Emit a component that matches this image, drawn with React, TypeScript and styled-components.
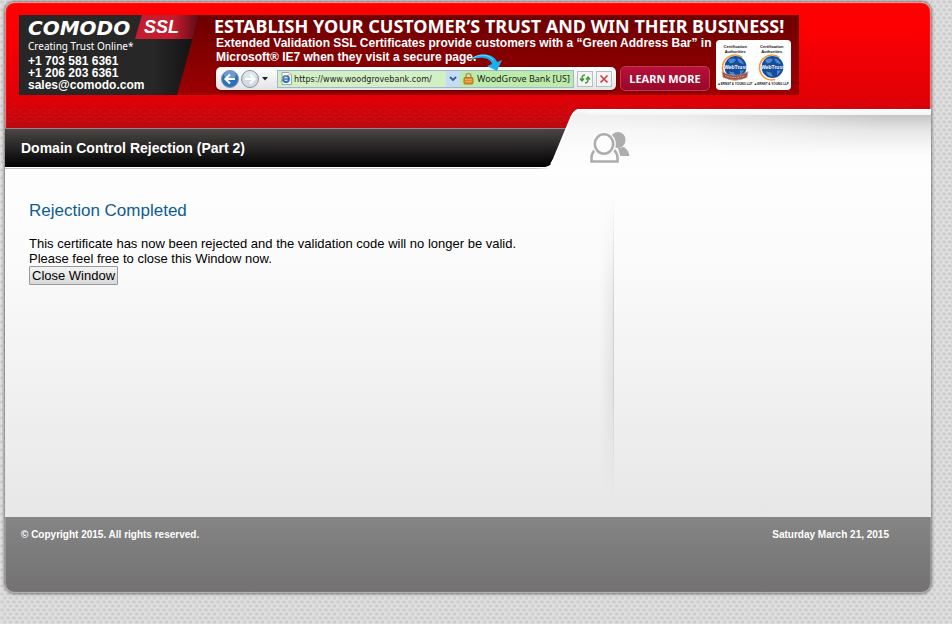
import React from "react";
import styled, { createGlobalStyle } from "styled-components";

const sans = `"Liberation Sans", Arial, sans-serif`;
const humanist = `"Noto Sans", "Open Sans", sans-serif`;

const GlobalStyle = createGlobalStyle`
  *, *::before, *::after { box-sizing: border-box; }
  body {
    margin: 0;
    min-height: 100vh;
    font-family: ${sans};
    font-size: 13px;
    color: #000;
    background-color: #dedede;
    background-image:
      radial-gradient(ellipse 3px 2px at 2px 2px, #cbcbcb 30%, transparent 100%),
      radial-gradient(ellipse 3px 2px at 5px 6px, #cbcbcb 30%, transparent 100%);
    background-size: 6px 8px;
  }
`;

const Card = styled.div`
  margin: 2px 21px 30px 5px;
  border-radius: 10px;
  overflow: hidden;
  background: #fdfdfd;
  box-shadow: 0 0 3px 1px rgba(0, 0, 0, 0.45);
`;

const Header = styled.header`
  padding-top: 13px;
  background:
    radial-gradient(ellipse 5px 3px at 5px 4px, transparent 70%, rgba(255, 90, 90, 0.05) 85%, transparent 100%) 0 97px / 10px 8px repeat-x,
    radial-gradient(ellipse 5px 3px at 5px 4px, transparent 70%, rgba(255, 90, 90, 0.1) 85%, transparent 100%) 5px 105px / 10px 8px repeat-x,
    radial-gradient(ellipse 5px 3px at 5px 4px, transparent 70%, rgba(255, 90, 90, 0.14) 85%, transparent 100%) 0 113px / 10px 8px repeat-x,
    linear-gradient(#ff0000 0, #fb0003 30px, #e00006 96px, #b80a10 127px);
  border-radius: 10px 10px 0 0;
  box-shadow: inset 0 2px 1px -1px #ff9a9a, inset 2px 0 1px -1px #ff8080, inset -2px 0 1px -1px #ff8080;
`;

const Banner = styled.section`
  display: flex;
  width: 780px;
  max-width: 100%;
  height: 80px;
  margin-left: 14px;
  background: linear-gradient(#6c0001, #9c0002);
  color: #fff;
`;

const Brand = styled.div`
  display: flex;
  flex-direction: column;
  flex: 0 0 180px;
  padding-left: 9px;
  background: linear-gradient(90deg, #272727 75%, #101010);
  clip-path: polygon(0 0, 100% 0, 158px 100%, 0 100%);
  font-weight: bold;
  font-size: 12px;
  line-height: 12px;
`;

const BrandTop = styled.div`
  display: flex;
  height: 24px;
  gap: 2px;
`;

const Wordmark = styled.span`
  width: 105px;
  padding-top: 3px;
  font: italic bold 20px/20px "DejaVu Sans", sans-serif;
`;

const SslMark = styled.span`
  flex: 1;
  padding-left: 9px;
  background: linear-gradient(90deg, #c51c30 60%, #5c0b14);
  clip-path: polygon(7px 0, 100% 0, 100% 100%, 0 100%);
  font: italic bold 18px/25px ${sans};
`;

const Tagline = styled.span`
  font: 10px/14px ${humanist};
  padding-bottom: 2px;
  height: 16px;
`;

const Promo = styled.div`
  flex: 1;
  min-width: 0;
  padding: 1px 8px 0 15px;
`;

const Headline = styled.h2`
  margin: 0;
  font: bold 18px/20px ${humanist};
  white-space: nowrap;
`;

const PromoRow = styled.div`
  display: flex;
  gap: 4px;
`;

const PromoMain = styled.div`
  flex: 0 0 498px;
  padding-left: 2px;
`;

const PromoText = styled.p`
  margin: 0;
  font-weight: bold;
  font-size: 12px;
  line-height: 14px;
  white-space: nowrap;
`;

const Browser = styled.div`
  display: flex;
  align-items: center;
  gap: 4px;
  padding-top: 2px;
`;

const Chrome = styled.div`
  position: relative;
  display: flex;
  flex: 0 0 400px;
  align-items: center;
  height: 23px;
  padding: 0 4px;
  border-radius: 5px;
  background: linear-gradient(#fff, #e4e4e4);
  box-shadow: 0 1px 3px rgba(0, 0, 0, 0.5);
`;

const IconButton = styled.button<{ $framed?: boolean }>`
  display: flex;
  flex: none;
  align-items: center;
  justify-content: center;
  width: ${(p) => (p.$framed ? 16 : 20)}px;
  height: ${(p) => (p.$framed ? 16 : 20)}px;
  padding: 0;
  border: ${(p) => (p.$framed ? "1px solid #b5bfca" : "0")};
  background: ${(p) => (p.$framed ? "#f4f4f4" : "none")};
`;

const Tools = styled.div`
  display: flex;
  gap: 3px;
  margin-left: 3px;
`;

const AddressField = styled.div`
  display: flex;
  align-items: center;
  flex: 1;
  min-width: 0;
  height: 18px;
  margin-left: 7px;
  padding-left: 2px;
  border: 1px solid #9fb6cf;
  background: #d3f0c5;
`;

const UrlInput = styled.input`
  flex: 1;
  min-width: 0;
  height: 16px;
  margin-left: 2px;
  padding: 0;
  border: 0;
  background: none;
  color: #222;
  font: 9px/16px "DejaVu Sans Condensed", "DejaVu Sans", sans-serif;
`;

const Identity = styled.span`
  display: flex;
  flex: none;
  align-items: center;
  gap: 3px;
  width: 113px;
  height: 16px;
  padding-left: 3px;
  background: #bcecaa;
  color: #222;
  font: 9px/16px ${humanist};
  white-space: nowrap;

  svg { flex: none; }
`;

const DropCell = styled(IconButton)`
  width: 14px;
  height: 16px;
  background: #c5dcf5;
`;

const Swoosh = styled.svg`
  position: absolute;
  left: 254px;
  top: -14px;
`;

const LearnMore = styled.a`
  width: 90px;
  height: 25px;
  border: 1px solid #cf3150;
  border-radius: 5px;
  background: linear-gradient(#b8103a, #96092b);
  box-shadow: 0 0 3px rgba(0, 0, 0, 0.5);
  color: #fff;
  font: bold 11px/23px ${humanist};
  text-align: center;
  text-decoration: none;
  white-space: nowrap;
`;

const Seals = styled.div`
  display: flex;
  flex: 0 0 75px;
  height: 50px;
  margin-top: 4px;
  padding: 4px 1px 0;
  border-radius: 4px;
  background: #fff;
`;

const Seal = styled.div`
  display: flex;
  flex: 1;
  flex-direction: column;
  align-items: center;
  min-width: 0;
  color: #111;
  font: bold 4px/5px ${sans};
  text-align: center;
  white-space: nowrap;
`;

const Auditor = styled.span`
  font-size: 3px;
`;

const TitleRow = styled.div`
  display: flex;
  align-items: flex-end;
  margin-top: 14px;
`;

const TitleBar = styled.div`
  flex: 0 0 538px;
  height: 39px;
  padding-left: 16px;
  border-top: 1px solid #a08080;
  background: linear-gradient(#4c4747, #000);
`;

const Title = styled.h1`
  margin: 0;
  color: #fff;
  font-size: 14px;
  line-height: 38px;
`;

const Curve = styled.svg`
  flex: 0 0 45px;
  display: block;
`;

const Tab = styled.div`
  flex: 1;
  height: 58px;
  padding: 22px 0 0 2px;
  background:
    linear-gradient(#fff, #f4f4f4) 0 0 / 100% 6px no-repeat,
    linear-gradient(transparent 6px, rgba(253, 253, 253, 0.6) 22px, #fdfdfd 46px),
    linear-gradient(90deg, #f0f0f0, #ebebeb 30%, #c6c6c6 85%);
`;

const Content = styled.div`
  display: flex;
  min-height: 350px;
  background:
    linear-gradient(90deg, #c4c4c4 530px, transparent 546px) 0 1px / 100% 1px no-repeat,
    linear-gradient(#fefefe, #fbfbfb 25%, #e7e7e7);
`;

const Main = styled.main`
  flex: 0 0 608px;
  padding: 34px 24px 0;
  line-height: 15px;
`;

const Heading = styled.h2`
  margin: 0 0 15px;
  color: #0d5c94;
  font-size: 17px;
  font-weight: normal;
  line-height: 20px;
`;

const Message = styled.p`
  margin: 0;
`;

const CloseButton = styled.button`
  display: block;
  height: 19px;
  padding: 0 2px;
  border: 1px solid #999;
  border-radius: 1px;
  background: linear-gradient(#f4f4f4, #d9d9d9);
  color: #000;
  font: 13px/17px ${sans};
`;

const Divider = styled.div`
  width: 14px;
  height: 303px;
  margin: 28px 0 0 -13px;
  border-right: 1px solid #d0d0d0;
  background: linear-gradient(90deg, transparent, rgba(0, 0, 0, 0.06)) padding-box;
  mask-image: linear-gradient(transparent, #000 35%, #000 65%, transparent);
`;

const Footer = styled.footer`
  display: flex;
  justify-content: space-between;
  height: 76px;
  padding: 11px 42px 0 16px;
  border-radius: 0 0 10px 10px;
  background: linear-gradient(#858585, #737171);
  box-shadow: inset 0 -2px 1px -1px #bbb, inset 1px 0 #999, inset -1px 0 #999;
  color: #fff;
  font-weight: bold;
  font-size: 10px;
  line-height: 14px;
`;

const NavArrow = ({ back }: { back?: boolean }) => (
  <svg width="20" height="20" viewBox="0 0 20 20">
    <circle cx="10" cy="10" r="8.5" fill={back ? "#2b6fc0" : "#d2dbe4"} stroke="#8a949e" />
    <ellipse cx="10" cy="6" rx="6" ry="4" fill="#fff" opacity="0.3" />
    <path d={back ? "M15 10H6M10 5.500L5.500 10l4.500 4.500" : "M5 10h9M10 5.500L14.500 10L10 14.500"} fill="none" stroke="#fff" strokeWidth="2.200" />
  </svg>
);

const PageIcon = () => (
  <svg width="12" height="13" viewBox="0 0 12 13">
    <path d="M2 .5h7l2.500 2.500v9.500H2z" fill="#fff" stroke="#94a8bd" />
    <circle cx="6" cy="7" r="3" fill="none" stroke="#2274c9" strokeWidth="1.800" />
    <path d="M4 7h5" stroke="#2274c9" strokeWidth="1.400" />
    <path d="M1 10C2 6 7 2 10.500 3" fill="none" stroke="#e3a632" />
  </svg>
);

const LockIcon = () => (
  <svg width="11" height="13" viewBox="0 0 11 13">
    <path d="M3 6V4a2.500 2.500 0 0 1 5 0v2" fill="none" stroke="#b89a68" strokeWidth="1.600" />
    <rect x="1" y="5.500" width="9" height="6.500" rx="1" fill="#dc8c2c" stroke="#b87224" />
    <path d="M2 7.500h7M2 9.500h7" stroke="#f3b660" strokeWidth=".7" />
  </svg>
);

const Globe = ({ ribbon }: { ribbon?: boolean }) => (
  <svg width="30" height="28" viewBox="0 0 30 27">
    <circle cx="15" cy="13" r="12.500" fill="none" stroke="#f09a3a" strokeWidth="1.600" strokeDasharray="50 29" transform="rotate(75 15 13)" />
    <circle cx="15.500" cy="12.500" r="11" fill="#164c9c" />
    <path d="M8 6c3-3 6-2 8-1l-2 3-4 1zM17 4c4 0 6 3 7 6l-5-2zM9 17l5 1 2 4c-4 0-6-2-7-5zM20 16l4 0-4 5z" fill="#4d87cc" />
    <text x="15.500" y="14" fill="#fff" fontFamily="Liberation Sans, sans-serif" fontWeight="bold" fontSize="5" textAnchor="middle">WebTrust</text>
    {ribbon && <path d="M2 17q13 8 26 0l-1 6q-12 5-24 0z" fill="#965344" stroke="#d6a594" strokeWidth=".6" />}
    {ribbon && <path d="M5 21q10 4 20 0" fill="none" stroke="#e5c3b7" strokeDasharray="1.500 1" />}
  </svg>
);

const People = () => (
  <svg width="42" height="34" viewBox="0 0 42 34" aria-hidden="true">
    <ellipse cx="28" cy="9" rx="7.500" ry="8" fill="#adadad" />
    <path d="M28 17l6-1c3 2 5 5 5.500 9H30z" fill="#adadad" />
    <path d="M1 32v-6c0-4 3-7 6-8h15c4 2 7 4 7 8v6z" fill="#fdfdfd" stroke="#fdfdfd" strokeWidth="3" />
    <path d="M1.500 30.500v-4c0-4 2-6.500 5-9h16c3 2.500 5 5 5 9v4z" fill="#fdfdfd" stroke="#adadad" strokeWidth="2.600" />
    <ellipse cx="14" cy="13" rx="11.800" ry="12" fill="#fdfdfd" />
    <ellipse cx="14" cy="13" rx="9.200" ry="9.700" fill="#fdfdfd" stroke="#adadad" strokeWidth="2.600" />
  </svg>
);

export default function App() {
  return (
    <>
      <GlobalStyle />
      <Card>
        <Header>
          <Banner>
            <Brand>
              <BrandTop>
                <Wordmark>COMODO</Wordmark>
                <SslMark>SSL</SslMark>
              </BrandTop>
              <Tagline>Creating Trust Online*</Tagline>
              <span>+1 703 581 6361</span>
              <span>+1 206 203 6361</span>
              <span>sales@comodo.com</span>
            </Brand>
            <Promo>
              <Headline>ESTABLISH YOUR CUSTOMER’S TRUST AND WIN THEIR BUSINESS!</Headline>
              <PromoRow>
                <PromoMain>
                  <PromoText>
                    Extended Validation SSL Certificates provide customers with a “Green Address Bar” in
                    <br />
                    Microsoft® IE7 when they visit a secure page.
                  </PromoText>
                  <Browser>
                    <Chrome>
                      <IconButton aria-label="Back"><NavArrow back /></IconButton>
                      <IconButton aria-label="Forward"><NavArrow /></IconButton>
                      <svg width="10" height="4" viewBox="0 0 10 4"><path d="M2 0h6L5 3.500z" fill="#222" /></svg>
                      <AddressField>
                        <PageIcon />
                        <UrlInput aria-label="Address" readOnly value="https://www.woodgrovebank.com/" />
                        <DropCell aria-label="Show addresses">
                          <svg width="8" height="6" viewBox="0 0 8 6"><path d="M1 1l3 3 3-3" fill="none" stroke="#3b5a96" strokeWidth="1.800" /></svg>
                        </DropCell>
                        <Identity><LockIcon />WoodGrove Bank [US]</Identity>
                      </AddressField>
                      <Tools>
                        <IconButton $framed aria-label="Refresh">
                          <svg width="12" height="12" viewBox="0 0 12 12"><path d="M6 2C3 2 3 4 3 7M1 5.500L3 8l2-2.500M6 10c3 0 3-2 3-5M7 6.500L9 4l2 2.500" fill="none" stroke="#3b9a32" strokeWidth="1.400" /></svg>
                        </IconButton>
                        <IconButton $framed aria-label="Stop">
                          <svg width="10" height="10" viewBox="0 0 10 10"><path d="M1.500 1.500l7 7M8.500 1.500l-7 7" stroke="#d33c3c" strokeWidth="1.600" /></svg>
                        </IconButton>
                      </Tools>
                      <Swoosh width="33" height="19" viewBox="0 0 33 19" aria-hidden="true">
                        <path d="M0 7C8-1 24 0 27 9l5-2-5 11-10-5 5-2C20 4 10 3 0 7z" fill="#18aef0" />
                        <path d="M3 5c7-5 17-3 20 2" fill="none" stroke="#6be0f5" />
                      </Swoosh>
                    </Chrome>
                    <LearnMore href="#learn-more">LEARN MORE</LearnMore>
                  </Browser>
                </PromoMain>
                <Seals>
                  {[true, false].map((ribbon) => (
                    <Seal key={String(ribbon)}>
                      <span>Certification</span>
                      <span>Authorities</span>
                      <Globe ribbon={ribbon} />
                      <Auditor>■ ERNST &amp; YOUNG LLP</Auditor>
                    </Seal>
                  ))}
                </Seals>
              </PromoRow>
            </Promo>
          </Banner>
          <TitleRow>
            <TitleBar><Title>Domain Control Rejection (Part 2)</Title></TitleBar>
            <Curve width="45" height="58" viewBox="0 0 45 58" aria-hidden="true">
              <defs>
                <linearGradient id="bar" x1="0" y1="0" x2="0" y2="1">
                  <stop stopColor="#4c4747" />
                  <stop offset="1" stopColor="#000" />
                </linearGradient>
                <linearGradient id="tab" x1="0" y1="0" x2="0" y2="1">
                  <stop stopColor="#fff" />
                  <stop offset=".1" stopColor="#f0f0f0" />
                  <stop offset=".38" stopColor="#f8f8f8" />
                  <stop offset=".8" stopColor="#fdfdfd" />
                </linearGradient>
              </defs>
              <path d="M0 19h30v39H0z" fill="url(#bar)" />
              <path d="M0 19.500h25" stroke="#a08080" />
              <path d="M0 58C6 58 8 56 11 50L28 9C31 2 34 0 42 0h3v58z" fill="url(#tab)" />
              <path d="M8 55C9 54 10 52 11 50L28 9C31 2 34 0 42 0h3" fill="none" stroke="#fff" strokeWidth="2" />
            </Curve>
            <Tab><People /></Tab>
          </TitleRow>
        </Header>
        <Content>
          <Main>
            <Heading>Rejection Completed</Heading>
            <Message>
              This certificate has now been rejected and the validation code will no longer be valid.
              <br />
              Please feel free to close this Window now.
            </Message>
            <CloseButton type="button">Close Window</CloseButton>
          </Main>
          <Divider />
        </Content>
        <Footer>
          <span>© Copyright 2015. All rights reserved.</span>
          <span>Saturday March 21, 2015</span>
        </Footer>
      </Card>
    </>
  );
}
